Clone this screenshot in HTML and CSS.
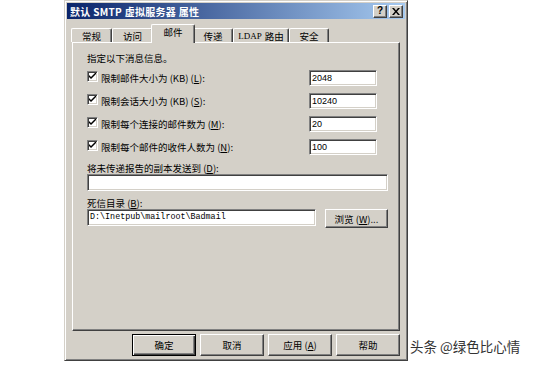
FILE: index.html
```html
<!DOCTYPE html>
<html lang="zh-CN">
<head>
    <meta charset="UTF-8">
    <title>默认 SMTP 虚拟服务器 属性</title>
    <link rel="stylesheet" href="styles.css">
</head>
<body>
    <div class="dialog">
      <div class="titlebar">
        <span class="title">默认 SMTP 虚拟服务器 属性</span>
        <div class="caption-buttons">
          <span class="cbtn">?</span>
          <span class="cbtn">
            <svg width="8" height="7" viewBox="0 0 8 7"><path d="M0 0h2l2 2.5L6 0h2L5 3.5 8 7H6L4 4.5 2 7H0l3-3.5z" fill="#000"/></svg>
          </span>
        </div>
      </div>
      <div class="tabs">
        <div class="tab w41">常规</div>
        <div class="tab w41">访问</div>
        <div class="tab active">邮件</div>
        <div class="tab w40">传递</div>
        <div class="tab w56"><span class="latin">LDAP</span>路由</div>
        <div class="tab w40">安全</div>
      </div>
      <div class="panel">
        <div class="heading">指定以下消息信息。</div>
        <div class="limit-row">
          <span class="check"><svg width="7" height="7" viewBox="0 0 7 7"><path d="M0 2v2l2 2 5-5V-1L2 4z" fill="#000"/></svg></span>
          <label class="limit-label">限制邮件大小为 (KB) (<u>L</u>):</label>
          <div class="field num">2048</div>
        </div>
        <div class="limit-row">
          <span class="check"><svg width="7" height="7" viewBox="0 0 7 7"><path d="M0 2v2l2 2 5-5V-1L2 4z" fill="#000"/></svg></span>
          <label class="limit-label">限制会话大小为 (KB) (<u>S</u>):</label>
          <div class="field num">10240</div>
        </div>
        <div class="limit-row">
          <span class="check"><svg width="7" height="7" viewBox="0 0 7 7"><path d="M0 2v2l2 2 5-5V-1L2 4z" fill="#000"/></svg></span>
          <label class="limit-label">限制每个连接的邮件数为 (<u>M</u>):</label>
          <div class="field num">20</div>
        </div>
        <div class="limit-row">
          <span class="check"><svg width="7" height="7" viewBox="0 0 7 7"><path d="M0 2v2l2 2 5-5V-1L2 4z" fill="#000"/></svg></span>
          <label class="limit-label">限制每个邮件的收件人数为 (<u>N</u>):</label>
          <div class="field num">100</div>
        </div>
        <div class="field-label first">将未传递报告的副本发送到 (<u>D</u>):</div>
        <div class="field wide"></div>
        <div class="field-label">死信目录 (<u>B</u>):</div>
        <div class="path-row">
          <div class="field path">D:\Inetpub\mailroot\Badmail</div>
          <button class="btn browse">浏览 (<u>W</u>)...</button>
        </div>
      </div>
      <div class="buttons">
        <button class="btn default">确定</button>
        <button class="btn">取消</button>
        <button class="btn">应用 (<u>A</u>)</button>
        <button class="btn">帮助</button>
      </div>
    </div>
    <div class="watermark">头条 @绿色比心情</div>
</body>
</html>
```

FILE: styles.css
```css
html, body {
    margin: 0;
    background: #fff;
}
body {
    width: 533px;
    height: 366px;
    position: relative;
    font-family: "Noto Sans CJK SC", "DejaVu Sans", sans-serif;
    font-size: 9.5px;
    color: #000;
}
.dialog {
    margin-left: 64px;
    width: 344px;
    height: 361px;
    box-sizing: border-box;
    background: #d4d0c8;
    border: 1px solid;
    border-color: #d4d0c8 #404040 #404040 #d4d0c8;
    box-shadow: inset 1px 1px #fff, inset -1px -1px #808080;
    padding: 2px;
    display: flex;
    flex-direction: column;
}
.titlebar {
    height: 16px;
    background: linear-gradient(to right, #0a246a, #a6caf0);
    display: flex;
    align-items: center;
    justify-content: space-between;
    padding: 0 2px 0 3px;
}
.title {
    color: #fff;
    font-weight: bold;
    font-size: 10px;
    letter-spacing: 0.3px;
}
.caption-buttons {
    display: flex;
    gap: 2px;
}
.cbtn {
    width: 12px;
    height: 11px;
    background: #d4d0c8;
    border: 1px solid;
    border-color: #fff #404040 #404040 #fff;
    box-shadow: inset -1px -1px #808080;
    display: flex;
    align-items: center;
    justify-content: center;
    font-family: "Liberation Sans", sans-serif;
    font-weight: bold;
    font-size: 10px;
    line-height: 1;
}
.tabs {
    height: 23px;
    display: flex;
    align-items: flex-end;
    padding-left: 4px;
}
.tab {
    height: 13px;
    border: 1px solid;
    border-bottom: none;
    border-color: #fff #404040 #404040 #fff;
    box-shadow: inset -1px 0 #808080;
    border-radius: 2px 2px 0 0;
    display: flex;
    align-items: center;
    justify-content: center;
    box-sizing: content-box;
}
.w41 { width: 39px; }
.w40 { width: 38px; }
.w56 { width: 54px; }
.tab.active {
    width: 42px;
    height: 17px;
    margin: 0 -2px;
    background: #d4d0c8;
    position: relative;
    z-index: 1;
    padding-bottom: 1px;
    margin-bottom: -1px;
    align-items: flex-start;
    padding-top: 0;
}
.latin {
    font-family: "Liberation Serif", serif;
    font-size: 9px;
    margin-right: 3px;
}
.panel {
    height: 289px;
    margin: 0 5px;
    box-sizing: border-box;
    border: 1px solid;
    border-color: #fff #404040 #404040 #fff;
    box-shadow: inset -1px -1px #808080;
    padding: 9px 11px 0 14px;
}
.heading {
    height: 12px;
    line-height: 12px;
    margin-bottom: 6px;
}
.limit-row {
    height: 16px;
    display: flex;
    align-items: center;
    margin-bottom: 7px;
}
.check {
    width: 9px;
    height: 9px;
    background: #fff;
    border: 1px solid;
    border-color: #808080 #fff #fff #808080;
    box-shadow: inset 1px 1px #404040, inset -1px -1px #d4d0c8;
    display: flex;
    align-items: center;
    justify-content: center;
    margin-right: 3px;
    margin-top: -3px;
}
.limit-label {
    flex: 1;
}
.field {
    background: #fff;
    box-sizing: border-box;
    border: 1px solid;
    border-color: #808080 #fff #fff #808080;
    box-shadow: inset 1px 1px #404040, inset -1px -1px #d4d0c8;
    padding: 1px 2px 0;
    font-family: "Liberation Sans", sans-serif;
    font-size: 9px;
    line-height: 13px;
}
.num {
    width: 68px;
    height: 16px;
    margin-right: 11px;
}
.field-label {
    height: 12px;
    line-height: 12px;
    margin: 6px 0 0;
}
.field-label.first {
    margin-top: 4px;
}
.wide {
    height: 17px;
}
.path-row {
    display: flex;
    align-items: flex-start;
    justify-content: space-between;
}
.path {
    width: 229px;
    height: 17px;
    font-family: "Liberation Mono", monospace;
    font-size: 8.4px;
}
.btn {
    font-family: "Noto Sans CJK SC", sans-serif;
    font-size: 9.5px;
    background: #d4d0c8;
    border: 1px solid;
    border-color: #fff #404040 #404040 #fff;
    box-shadow: inset -1px -1px #808080;
    padding: 0;
    margin: 0;
    color: #000;
}
.browse {
    width: 63px;
    height: 19px;
}
.buttons {
    display: flex;
    justify-content: flex-end;
    gap: 4px;
    margin: 3px 5px 0 0;
}
.buttons .btn {
    width: 64px;
    height: 22px;
}
.btn.default {
    border: 1px solid #000;
    box-shadow: inset 1px 1px #fff, inset -1px -1px #404040, inset -2px -2px #808080;
}
.watermark {
    position: absolute;
    left: 410px;
    top: 336px;
    font-size: 13.5px;
    color: #333;
}
```
